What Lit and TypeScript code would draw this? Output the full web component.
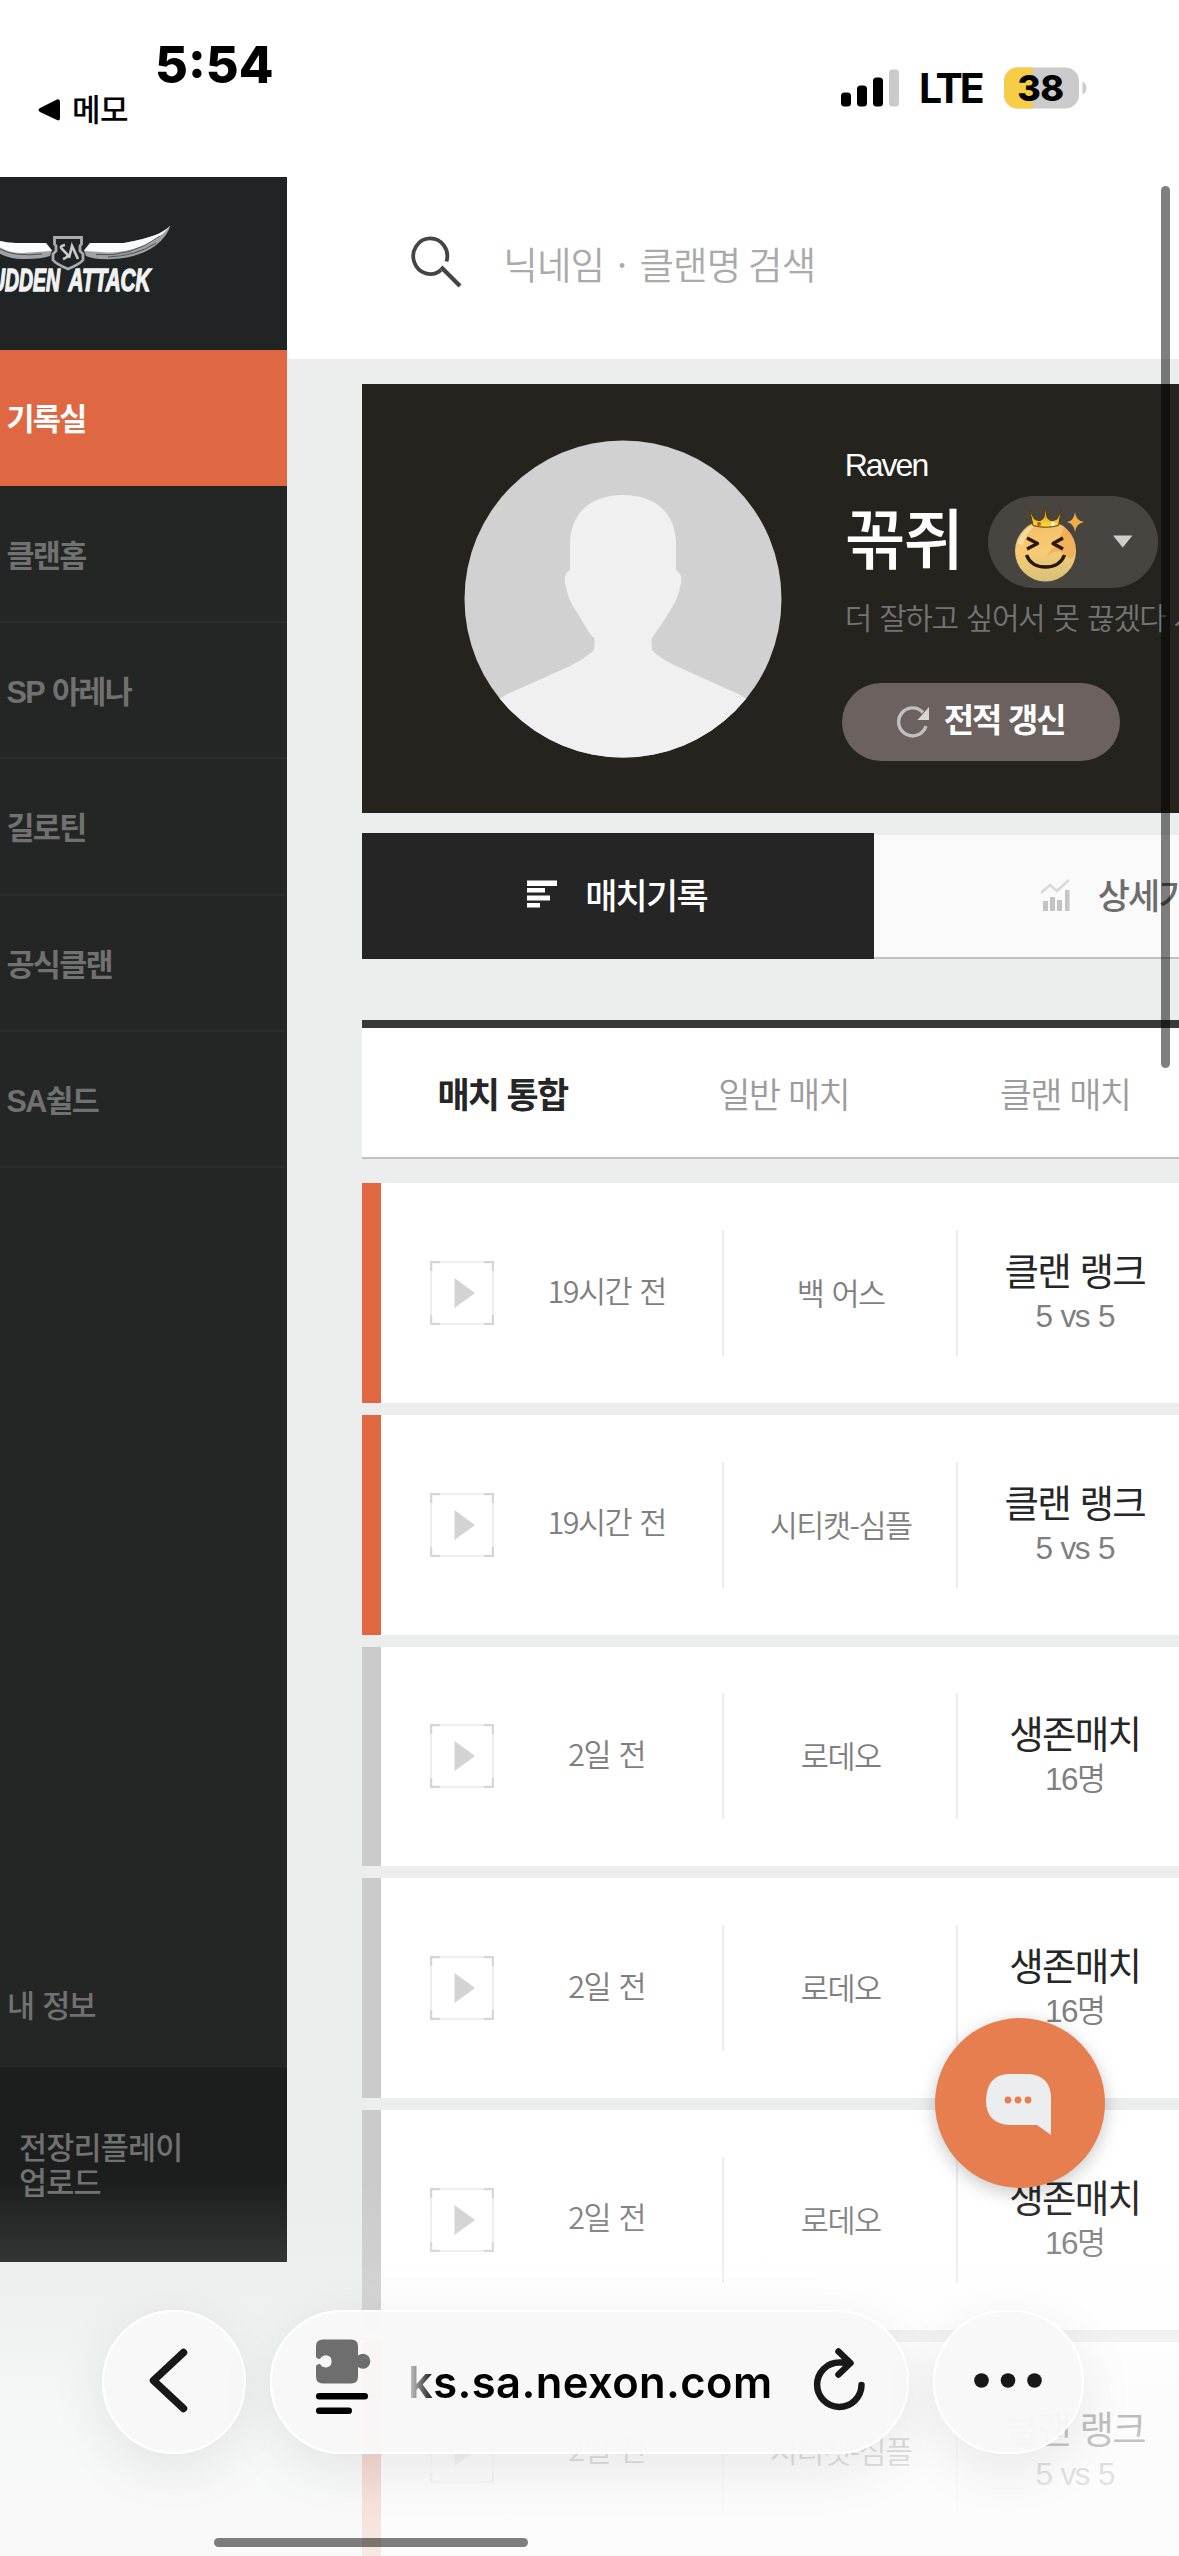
import { LitElement, html, css } from "lit";
import { customElement, property } from "lit/decorators.js";
import { classMap } from "lit/directives/class-map.js";

interface Match {
  win: boolean;
  time: string;
  map: string;
  mode: string;
  size: string;
}

const MATCHES: Match[] = [
  { win: true, time: "19시간 전", map: "백 어스", mode: "클랜 랭크", size: "5 vs 5" },
  { win: true, time: "19시간 전", map: "시티캣-심플", mode: "클랜 랭크", size: "5 vs 5" },
  { win: false, time: "2일 전", map: "로데오", mode: "생존매치", size: "16명" },
  { win: false, time: "2일 전", map: "로데오", mode: "생존매치", size: "16명" },
  { win: false, time: "2일 전", map: "로데오", mode: "생존매치", size: "16명" },
  { win: true, time: "2일 전", map: "시티캣-심플", mode: "클랜 랭크", size: "5 vs 5" },
];

const MENU = ["기록실", "클랜홈", "SP 아레나", "길로틴", "공식클랜", "SA쉴드"];

/** iOS status bar. */
@customElement("status-bar")
class StatusBar extends LitElement {
  static styles = css`
    :host {
      display: flex;
      justify-content: space-between;
      height: 177px;
      box-sizing: border-box;
      padding: 36px 92px 0 37px;
      background: #fff;
      color: #000;
      font-family: Inter, "Noto Sans CJK KR", sans-serif;
    }
    .left { display: flex; flex-direction: column; }
    .time {
      padding-left: 118px;
      font-size: 50.500px;
      line-height: 58px;
      font-weight: 800;
      letter-spacing: 0;
    }
    .back {
      display: flex;
      align-items: center;
      gap: 11px;
      height: 30px;
      margin-top: 1px;
      font-size: 31px;
      line-height: 30px;
      font-weight: 500;
      letter-spacing: -0.500px;
    }
    .right { display: flex; align-items: center; height: 50px; margin-top: 27px; }
    .signal { display: block; }
    .lte { margin-left: 18px; width: 66px; font-size: 41px; line-height: 50px; font-weight: 700; letter-spacing: -3px; }
    .battery { display: block; margin-left: 19px; }
  `;
  render() {
    return html`
      <div class="left">
        <div class="time">5:54</div>
        <div class="back">
          <svg width="24" height="24" viewBox="0 0 24 24">
            <path d="M20 1.500Q23 .5 23 4V20Q23 23.500 20 22L3 14Q0 12 3 10Z" />
          </svg>
          <span>메모</span>
        </div>
      </div>
      <div class="right">
        <svg class="signal" width="60" height="38" viewBox="0 0 60 38">
          <rect x="0" y="23.500" width="10" height="14" rx="3.500" />
          <rect x="16" y="16.500" width="10" height="21" rx="3.500" />
          <rect x="32" y="8.500" width="10" height="29" rx="3.500" />
          <rect x="48" y="0.500" width="10" height="37" rx="3.500" fill="#cbcbcb" />
        </svg>
        <span class="lte">LTE</span>
        <svg class="battery" width="83" height="42" viewBox="0 0 83 42">
          <clipPath id="cell"><rect x="0" y="0.500" width="75" height="41" rx="13.500" /></clipPath>
          <g clip-path="url(#cell)">
            <rect width="83" height="42" fill="#cbcbcb" />
            <rect width="29" height="42" fill="#f6ce46" />
          </g>
          <path d="M78.500 14.500Q82.500 17 82.500 21T78.500 27.500Z" fill="#cbcbcb" />
          <text x="36.500" y="34" text-anchor="middle" font-size="36" font-weight="800" letter-spacing="-0.5">38</text>
        </svg>
      </div>
    `;
  }
}

/** Left navigation column. */
@customElement("side-menu")
class SideMenu extends LitElement {
  static styles = css`
    :host {
      display: flex;
      flex-direction: column;
      width: 286.700px;
      height: 2085px;
      flex: none;
      overflow: hidden;
      background: #242625;
      color: #717171;
      font-family: "Liberation Sans", "Noto Sans CJK KR", sans-serif;
      font-size: 30.500px;
      font-weight: 700;
      letter-spacing: -1.700px;
      word-spacing: 2px;
    }
    .logo { height: 173px; flex: none; background: #212425; }
    .logo svg { display: block; }
    .item {
      box-sizing: border-box;
      flex: none;
      height: 136.400px;
      padding: 0 0 0 6.500px;
      display: flex;
      align-items: center;
      border-bottom: 2px solid #2a2c2c;
    }
    .item.on { background: #df6843; color: #fff; border-color: #df6843; }
    .mine { margin-top: auto; height: 124px; border: 0; padding: 0 0 3px 7px; }
    .upload {
      flex: none;
      box-sizing: border-box;
      height: 195px;
      padding: 63px 0 0 19px;
      background: #1c1e1d;
      border-top: 1px solid #202221;
      line-height: 35px;
      letter-spacing: -0.800px;
    }
    .mine, .upload { font-weight: 500; }
    .word { font-style: italic; font-weight: 700; font-size: 31px; fill: #f1f3f3; stroke: #f1f3f3; stroke-width: 1.400px; letter-spacing: 0; word-spacing: 0; }
  `;
  render() {
    return html`
      <div class="logo">
        <svg width="287" height="173" viewBox="0 0 287 173">
          <g fill="#9ea2a2">
            <path d="M84 73 90 66H124Q146 62 158 57Q166 53 170.500 48.500Q167 60 155 69Q138 81 112 82Q96 83 86 79Z" />
            <path d="M52 73 46 66H16Q6 66-4 63V74Q8 83 26 82Q42 82 50 79Z" />
          </g>
          <g fill="#fafbfb">
            <path d="M84 74 90 66H124Q146 62 158 57Q166 53 170.500 48.500Q160 62 142 69Q122 77 100 75Z" />
            <path d="M52 74 46 66H16Q6 66-4 63V68Q8 76 22 76Z" />
          </g>
          <g fill="none" stroke="#2b2e2e" stroke-width="0.700">
            <path d="M96 77.500Q130 81 160 59M108 80Q136 79 156 66" />
            <path d="M0 72Q14 80 42 77" />
          </g>
          <path d="M54.500 60.500H81.500V67L80 69V74L83 77V83Q80 87 68 92Q56 87 53 83V77L56 74V69L54.500 67Z" fill="#212425" stroke="#a9adad" stroke-width="2.800" />
          <path d="M65 68Q59 69 62 72L67 77Q69 80 63 82M69 81 72 69 78 82" fill="none" stroke="#c9cccc" stroke-width="2.600" />
          <text class="word" x="60" y="113.500" text-anchor="end" textLength="82" lengthAdjust="spacingAndGlyphs">SUDDEN</text>
          <text class="word" x="68.500" y="113.500" textLength="82" lengthAdjust="spacingAndGlyphs">ATTACK</text>
        </svg>
      </div>
      ${MENU.map((m, i) => html`<div class=${classMap({ item: true, on: i === 0 })}>${m}</div>`)}
      <div class="item mine">내 정보</div>
      <div class="upload">전장리플레이<br />업로드</div>
    `;
  }
}

/** One line of the match history. */
@customElement("match-row")
class MatchRow extends LitElement {
  @property({ attribute: false }) match!: Match;
  static styles = css`
    :host {
      display: grid;
      grid-template-columns: 360px 234px 236px 1fr;
      align-items: center;
      box-sizing: border-box;
      height: 219.700px;
      background: #fff;
      color: #7f7f7f;
      font-family: "Noto Sans CJK KR", sans-serif;
      font-size: 30.500px;
      font-weight: 350;
      letter-spacing: -1.500px;
      word-spacing: 3px;
      position: relative;
    }
    .bar { position: absolute; left: 0; top: 0; bottom: 0; width: 19.500px; background: #cbcbcb; }
    .bar.win { background: #df6843; }
    .when { display: grid; grid-template-columns: 63px 1fr; align-items: center; padding-left: 68px; }
    .when span { text-align: center; margin: -7px 0 0 -1px; }
    .when svg { margin-top: 0; }
    .cell {
      display: flex;
      flex-direction: column;
      align-items: center;
      justify-content: center;
      box-sizing: border-box;
      height: 126px;
      border-left: 2px solid #ececec;
    }
    .map { line-height: 44px; padding: 0 0 2px 2px; }
    .mode { font-size: 37.500px; line-height: 50px; color: #262626; font-weight: 400; letter-spacing: -1.800px; margin-top: -7px; }
    .size { font-family: "Liberation Sans", "Noto Sans CJK KR", sans-serif; font-size: 31.500px; line-height: 38px; letter-spacing: -1.600px; word-spacing: 2px; margin-top: 3px; }
  `;
  render() {
    const m = this.match;
    return html`
      <div class=${classMap({ bar: true, win: m.win })}></div>
      <div class="when">
        <svg width="64" height="64" viewBox="0 0 64 64" fill="none">
          <rect x="1" y="1" width="62" height="62" stroke="#efefef" stroke-width="2" />
          <path d="M1 10V1H10M54 1H63V10M63 54V63H54M10 63H1V54" stroke="#d6d6d6" stroke-width="2.500" />
          <path d="M24.500 17V47L45 32Z" fill="#d3d3d3" />
        </svg>
        <span>${m.time}</span>
      </div>
      <div class="cell map"><span>${m.map}</span></div>
      <div class="cell"><span class="mode">${m.mode}</span><span class="size">${m.size}</span></div>
    `;
  }
}

/** Profile banner. */
@customElement("profile-card")
class ProfileCard extends LitElement {
  static styles = css`
    :host {
      display: flex;
      height: 429.500px;
      background: #25231e;
      color: #fff;
      font-family: "Noto Sans CJK KR", sans-serif;
    }
    .avatar { flex: none; margin: 56px 0 0 102px; }
    .info { flex: none; padding: 63px 0 0 63px; white-space: nowrap; }
    .clan { font-family: "Liberation Sans", sans-serif; font-size: 32px; line-height: 38px; letter-spacing: -2px; margin-top: -1px; }
    .name-row { display: flex; align-items: center; gap: 30px; height: 92px; margin-top: 12px; }
    .name { font-size: 66px; font-weight: 500; letter-spacing: -2px; line-height: 92px; width: 113px; margin-top: -13px; }
    .badge { display: flex; align-items: center; width: 170px; height: 92px; box-sizing: border-box; border-radius: 46px; background: #484541; }
    .motto { margin-top: 8px; font-size: 30px; line-height: 40px; font-weight: 350; color: #747474; letter-spacing: -1.500px; word-spacing: 3.200px; }
    .refresh {
      display: flex;
      align-items: center;
      gap: 15px;
      width: 278px;
      height: 78px;
      box-sizing: border-box;
      padding-left: 55px;
      margin: 47px 0 0 -3px;
      border-radius: 39px;
      background: #6b615e;
      font-size: 33px;
      font-weight: 700;
      letter-spacing: -2px;
      word-spacing: 2px;
    }
    .refresh span { margin-top: -7px; }
  `;
  render() {
    return html`
      <svg class="avatar" width="318" height="318" viewBox="0 0 318 318">
        <clipPath id="disc"><circle cx="159" cy="159" r="158.500" /></clipPath>
        <g clip-path="url(#disc)">
          <rect width="318" height="318" fill="#d1d1d1" />
          <path fill="#f0f0f0" d="M159 55C192 55 212 74 212 104V130C217 133 219 138 216 147C214 160 207 169 201 179L188 198Q187 199 188 210C194 216 200 220 212 226L270 252Q290 260 318 290V318H0V290Q28 260 48 252L106 226C118 220 124 215 130 210Q131 199 130 198Q126 195 117 179C111 169 104 160 102 147C99 138 101 133 106 130V104C106 74 126 55 159 55Z" />
        </g>
      </svg>
      <div class="info">
        <div class="clan">Raven</div>
        <div class="name-row">
          <div class="name">${"\uAF2E\uC950"}</div>
          <div class="badge">
            <svg width="170" height="92" viewBox="0 0 170 92">
              <defs>
                <linearGradient id="face" x1=".3" y1="0" x2=".45" y2="1">
                  <stop offset="0" stop-color="#f3bd63" />
                  <stop offset=".5" stop-color="#f8cb74" />
                  <stop offset="1" stop-color="#d6c27a" />
                </linearGradient>
                <linearGradient id="gold" x1="0" y1="0" x2="0" y2="1">
                  <stop offset="0" stop-color="#c48418" />
                  <stop offset="1" stop-color="#ffdf3a" />
                </linearGradient>
              </defs>
              <circle cx="57.500" cy="55" r="30.500" fill="url(#face)" />
              <path d="M76 31Q89 40 87 56Q84 67 78 60Q70 50 58 61Q74 40 76 31Z" fill="#ef9c44" opacity=".55" />
              <path d="M30 47Q35 31 49 28Q38 36 34 50Z" fill="#fff" opacity=".4" />
              <g fill="none" stroke="#2a1604" stroke-width="3.400" stroke-linejoin="round">
                <path d="M39 42 49.500 47.500 39 53M75 42 65 47.500 75 53" />
                <path d="M38.500 59Q43 71 57.500 71T76.500 59" />
              </g>
              <path d="M41.500 14 46.500 23Q53 27 56 21L57.500 11 59 21Q62 27 69 23L73.500 14 70.500 29.500Q57.500 33 45 29.500Z" fill="url(#gold)" stroke="#5a3806" stroke-width="1" />
              <circle cx="51" cy="28" r="2" fill="#c4561c" />
              <circle cx="65" cy="28" r="2.200" fill="#e6ebf0" />
              <path d="M87 16Q88 25 96 26Q88 27.500 87 36Q86 27.500 79 26Q86 25 87 16Z" fill="#efae45" />
              <path d="M125 39.500H144.500L134.700 51.500Z" fill="#cfcecd" />
            </svg>
          </div>
        </div>
        <div class="motto">더 잘하고 싶어서 못 끊겠다 사</div>
        <div class="refresh">
          <svg width="32" height="32" viewBox="0 0 32 32" fill="none">
            <path d="M29 20A14 14 0 1 1 26 6.500" stroke="#c2bfbe" stroke-width="3.400" />
            <path d="M32 1V14H20.500Z" fill="#d8d6d5" />
          </svg>
          <span>전적 갱신</span>
        </div>
      </div>
    `;
  }
}

/** Floating Safari controls along the bottom edge. */
@customElement("browser-bar")
class BrowserBar extends LitElement {
  static styles = css`
    :host {
      display: flex;
      gap: 24px;
      height: 144px;
      font-family: Inter, sans-serif;
    }
    .glass {
      box-sizing: border-box;
      height: 144px;
      border-radius: 72px;
      border: 2px solid #fff;
      background: rgba(248, 248, 248, 0.960);
      box-shadow: 0 14px 56px rgba(0, 0, 0, 0.085);
    }
    .round { width: 144px; }
    .more { width: 151px; }
    .address { display: flex; align-items: center; width: 639px; padding-left: 43px; }
    .address svg:first-child { margin-top: -10px; }
    .address svg:last-child { margin: -6px 0 0 1px; }
    .url {
      flex: none;
      width: 402px;
      margin-left: 35px;
      font-size: 43.500px;
      line-height: 60px;
      font-weight: 600;
      letter-spacing: 0.400px;
      mask-image: linear-gradient(90deg, rgba(0, 0, 0, 0.150), #000 28px);
    }
    svg { display: block; flex: none; }
  `;
  render() {
    return html`
      <div class="glass round">
        <svg width="140" height="140" viewBox="2 2 140 140" fill="none">
          <path d="M81.500 42.500 51.500 70.500 81.500 98.500" stroke="#181818" stroke-width="7.500" stroke-linecap="round" stroke-linejoin="round" />
        </svg>
      </div>
      <div class="glass address">
        <svg width="58" height="78" viewBox="0 0 58 78">
          <path fill="#6e6e6e" d="M8 1.500H36Q43 1.500 43 8V17.500A7.500 7.500 0 1 1 43 29V38.500Q43 45.500 36 45.500H8Q1 45.500 1 38.500V29Q1 26 5 26Q7 29.500 11.500 29.500A6.200 6.200 0 0 0 11.500 17.300Q7 17.300 5 21Q1 21 1 18V8Q1 1.500 8 1.500Z" />
          <rect x="1" y="55" width="52" height="6.500" rx="3.200" />
          <rect x="1" y="69.500" width="36" height="6.500" rx="3.200" />
        </svg>
        <div class="url">ks.sa.nexon.com</div>
        <svg width="60" height="72" viewBox="0 0 60 72" fill="none" stroke="#181818" stroke-width="6.500" stroke-linecap="round" stroke-linejoin="round">
          <path d="M50.500 42A22.200 22.200 0 1 1 28.300 19.500H38M27.500 8.500 39.500 20 27.500 31.500" />
        </svg>
      </div>
      <div class="glass more">
        <svg width="147" height="140" viewBox="2 2 147 140" fill="#181818">
          <circle cx="48.500" cy="70.500" r="7.300" /><circle cx="75" cy="70.500" r="7.300" /><circle cx="101.500" cy="70.500" r="7.300" />
        </svg>
      </div>
    `;
  }
}

@customElement("app-root")
class AppRoot extends LitElement {
  static styles = css`
    :host {
      display: block;
      position: relative;
      width: 1179px;
      height: 2556px;
      overflow: hidden;
      background: #ebeeed;
      font-family: "Noto Sans CJK KR", sans-serif;
    }
    .page { display: flex; height: 2379px; }
    .main { flex: 1; min-width: 0; overflow: hidden; }
    .search {
      display: flex;
      align-items: center;
      gap: 41.500px;
      height: 182px;
      box-sizing: border-box;
      padding: 0 0 13px 123px;
      background: #fff;
      font-size: 37.500px;
      font-weight: 350;
      letter-spacing: -0.800px;
      color: #aaa;
    }
    .search span { margin-top: 1px; }
    .content { width: 1024px; padding: 24.700px 0 0 75px; }
    .tabs { display: flex; align-items: flex-end; height: 126.500px; margin-top: 19.500px; }
    .tab {
      display: flex;
      align-items: center;
      box-sizing: border-box;
      flex: none;
      width: 512px;
      height: 124px;
      padding: 0 0 5px 165.500px;
      gap: 26px;
      background: #fafafa;
      border-bottom: 2px solid #c0c2c2;
      color: #6d6d6d;
      font-size: 35px;
      font-weight: 500;
      letter-spacing: -1.800px;
    }
    .tab.on { width: 512.500px; height: 126.500px; background: #252525; color: #fff; border: 0; }
    .tab svg { margin-top: 2px; }
    .filters {
      display: flex;
      align-items: center;
      box-sizing: border-box;
      height: 139px;
      margin-top: 61px;
      padding-bottom: 1px;
      background: #fff;
      border-top: 8px solid #383a3a;
      border-bottom: 2px solid #c0c2c2;
      color: #9c9c9c;
      font-size: 35px;
      font-weight: 350;
      letter-spacing: -1.700px;
      word-spacing: 2.500px;
    }
    .filter { width: 281.300px; text-align: center; }
    .filter.on { color: #262626; font-weight: 700; letter-spacing: -1.900px; }
    .rows { display: grid; gap: 12px; margin-top: 24px; }
    .fade {
      position: absolute;
      left: 0;
      right: 0;
      top: 2180px;
      bottom: 0;
      background: linear-gradient(rgba(251, 251, 251, 0) 0, rgba(251, 251, 251, 0.100) 80px, rgba(251, 251, 251, 0.240) 130px, rgba(251, 251, 251, 0.700) 230px, rgba(251, 251, 251, 0.820) 320px, rgba(251, 251, 251, 0.870) 376px);
    }
    .chat {
      position: absolute;
      left: 935px;
      top: 2018px;
      width: 170px;
      height: 170px;
      border-radius: 50%;
      background: #e67e4f;
      box-shadow: 0 5px 18px rgba(0, 0, 0, 0.220);
    }
    .nav { position: absolute; left: 102px; top: 2310px; }
    .vbar { position: absolute; left: 1161px; top: 186px; width: 9px; height: 882px; border-radius: 5px; background: rgba(0, 0, 0, 0.500); }
    .hbar { position: absolute; left: 214px; top: 2538px; width: 314px; height: 9px; border-radius: 5px; background: rgba(0, 0, 0, 0.500); }
    svg { display: block; flex: none; }
  `;
  render() {
    return html`
      <status-bar></status-bar>
      <div class="page">
        <side-menu></side-menu>
        <div class="main">
          <div class="search">
            <svg width="52" height="52" viewBox="0 0 52 52" fill="none" stroke="#444">
              <path d="M36.500 25.500A17 17.800 0 1 0 31 34" stroke-width="3.800" />
              <path d="M31 31 50 50" stroke-width="4.200" />
            </svg>
            <span>닉네임 · 클랜명 검색</span>
          </div>
          <div class="content">
            <profile-card></profile-card>
            <div class="tabs">
              <div class="tab on">
                <svg width="32" height="28" viewBox="0 0 32 28" fill="#fff">
                  <path d="M0 .5H30V6H0ZM0 8H18V12.500H0ZM0 15.500H23V20.500H0ZM0 23H13V27.500H0Z" />
                </svg>
                <span>매치기록</span>
              </div>
              <div class="tab">
                <svg width="32" height="32" viewBox="0 0 32 32">
                  <path d="M1 14 10 6 17 12 29 1" fill="none" stroke="#d9d9d9" stroke-width="2.500" />
                  <path d="M3 22H8V32H3ZM10 18H15V32H10ZM17 21H22V32H17ZM25 11H29.500V32H25Z" fill="#c4c4c4" />
                </svg>
                <span>상세기록</span>
              </div>
            </div>
            <div class="filters">
              <div class="filter on">매치 통합</div>
              <div class="filter">일반 매치</div>
              <div class="filter">클랜 매치</div>
            </div>
            <div class="rows">${MATCHES.map((m) => html`<match-row .match=${m}></match-row>`)}</div>
          </div>
        </div>
      </div>
      <div class="chat">
        <svg width="170" height="170" viewBox="0 0 170 170">
          <path d="M73 56H94Q116 58 116 80V117L102 107H75Q51 106 51 82Q52 57 73 56Z" fill="#ecedef" />
          <g fill="#e67e4f"><circle cx="73" cy="82" r="3.400" /><circle cx="83" cy="82" r="3.400" /><circle cx="93" cy="82" r="3.400" /></g>
        </svg>
      </div>
      <div class="fade"></div>
      <browser-bar class="nav"></browser-bar>
      <div class="vbar"></div>
      <div class="hbar"></div>
    `;
  }
}
